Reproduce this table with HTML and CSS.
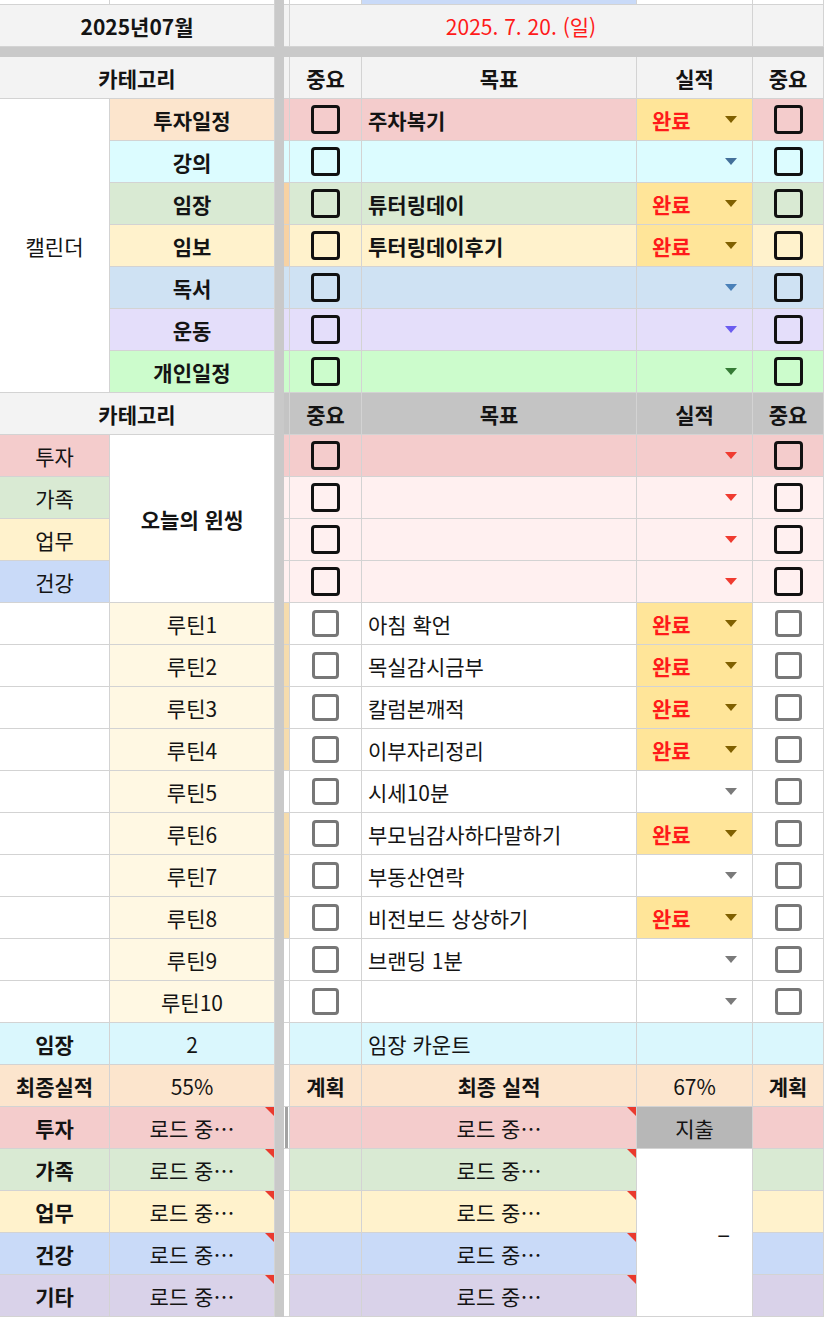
FILE: index.html
```html
<!DOCTYPE html>
<html lang="ko">
<head>
    <meta charset="UTF-8">
    <meta name="viewport" content="width=device-width, initial-scale=1.0">
    <title>데일리 플래너</title>
    <link rel="stylesheet" href="styles.css">
</head>
<body>
<div class="sheet">
    <div class="hdiv"></div>
    <div class="vdiv"></div>

    <!-- row above the date (scrolled off) -->
    <div class="c"></div><div class="c"></div><div class="c"></div><div class="c"></div>
    <div class="c top-blue"></div><div class="c"></div><div class="c"></div>

    <!-- date -->
    <div class="c hd b span2">2025년07월</div>
    <div class="c hd"></div>
    <div class="c hd date span3">2025. 7. 20. (일)</div>
    <div class="c hd"></div>

    <!-- calendar header -->
    <div class="c hd b span2">카테고리</div>
    <div class="c hd"></div>
    <div class="c hd b">중요</div>
    <div class="c hd b">목표</div>
    <div class="c hd b">실적</div>
    <div class="c hd b">중요</div>

    <!-- calendar -->
    <div class="c cal">캘린더</div>
    <div class="c peach b">투자일정</div>
    <div class="c pink"></div>
    <div class="c pink"><span class="box"></span></div>
    <div class="c pink b l">주차복기</div>
    <div class="c done sel">완료<i class="arr ol"></i></div>
    <div class="c pink"><span class="box"></span></div>

    <div class="c cyan b">강의</div>
    <div class="c cyan"></div>
    <div class="c cyan"><span class="box"></span></div>
    <div class="c cyan"></div>
    <div class="c cyan sel end"><i class="arr sl"></i></div>
    <div class="c cyan"><span class="box"></span></div>

    <div class="c green b">임장</div>
    <div class="c orange"></div>
    <div class="c green"><span class="box"></span></div>
    <div class="c green b l">튜터링데이</div>
    <div class="c done sel">완료<i class="arr ol"></i></div>
    <div class="c green"><span class="box"></span></div>

    <div class="c yellow b">임보</div>
    <div class="c orange"></div>
    <div class="c yellow"><span class="box"></span></div>
    <div class="c yellow b l">투터링데이후기</div>
    <div class="c done sel">완료<i class="arr ol"></i></div>
    <div class="c yellow"><span class="box"></span></div>

    <div class="c blue b">독서</div>
    <div class="c blue"></div>
    <div class="c blue"><span class="box"></span></div>
    <div class="c blue"></div>
    <div class="c blue sel end"><i class="arr bu"></i></div>
    <div class="c blue"><span class="box"></span></div>

    <div class="c lav b">운동</div>
    <div class="c lav"></div>
    <div class="c lav"><span class="box"></span></div>
    <div class="c lav"></div>
    <div class="c lav sel end"><i class="arr vi"></i></div>
    <div class="c lav"><span class="box"></span></div>

    <div class="c lime b">개인일정</div>
    <div class="c lime"></div>
    <div class="c lime"><span class="box"></span></div>
    <div class="c lime"></div>
    <div class="c lime sel end"><i class="arr gn"></i></div>
    <div class="c lime"><span class="box"></span></div>

    <!-- one thing header -->
    <div class="c hd b span2">카테고리</div>
    <div class="c hg"></div>
    <div class="c hg b">중요</div>
    <div class="c hg b">목표</div>
    <div class="c hg b">실적</div>
    <div class="c hg b">중요</div>

    <!-- one thing -->
    <div class="c pink">투자</div>
    <div class="c b wish">오늘의 윈씽</div>
    <div class="c pink"></div>
    <div class="c pink"><span class="box"></span></div>
    <div class="c pink"></div>
    <div class="c pink sel end"><i class="arr rd"></i></div>
    <div class="c pink"><span class="box"></span></div>

    <div class="c green">가족</div>
    <div class="c blush"></div>
    <div class="c blush"><span class="box"></span></div>
    <div class="c blush"></div>
    <div class="c blush sel end"><i class="arr rd"></i></div>
    <div class="c blush"><span class="box"></span></div>

    <div class="c yellow">업무</div>
    <div class="c blush"></div>
    <div class="c blush"><span class="box"></span></div>
    <div class="c blush"></div>
    <div class="c blush sel end"><i class="arr rd"></i></div>
    <div class="c blush"><span class="box"></span></div>

    <div class="c sky">건강</div>
    <div class="c blush"></div>
    <div class="c blush"><span class="box"></span></div>
    <div class="c blush"></div>
    <div class="c blush sel end"><i class="arr rd"></i></div>
    <div class="c blush"><span class="box"></span></div>

    <!-- routines -->
    <div class="c"></div>
    <div class="c cream">루틴1</div>
    <div class="c tan"></div>
    <div class="c"><span class="box soft"></span></div>
    <div class="c l">아침 확언</div>
    <div class="c done sel">완료<i class="arr ol"></i></div>
    <div class="c"><span class="box soft"></span></div>

    <div class="c"></div>
    <div class="c cream">루틴2</div>
    <div class="c tan"></div>
    <div class="c"><span class="box soft"></span></div>
    <div class="c l">목실감시금부</div>
    <div class="c done sel">완료<i class="arr ol"></i></div>
    <div class="c"><span class="box soft"></span></div>

    <div class="c"></div>
    <div class="c cream">루틴3</div>
    <div class="c tan"></div>
    <div class="c"><span class="box soft"></span></div>
    <div class="c l">칼럼본깨적</div>
    <div class="c done sel">완료<i class="arr ol"></i></div>
    <div class="c"><span class="box soft"></span></div>

    <div class="c"></div>
    <div class="c cream">루틴4</div>
    <div class="c tan"></div>
    <div class="c"><span class="box soft"></span></div>
    <div class="c l">이부자리정리</div>
    <div class="c done sel">완료<i class="arr ol"></i></div>
    <div class="c"><span class="box soft"></span></div>

    <div class="c"></div>
    <div class="c cream">루틴5</div>
    <div class="c"></div>
    <div class="c"><span class="box soft"></span></div>
    <div class="c l">시세10분</div>
    <div class="c sel end"><i class="arr gy"></i></div>
    <div class="c"><span class="box soft"></span></div>

    <div class="c"></div>
    <div class="c cream">루틴6</div>
    <div class="c tan"></div>
    <div class="c"><span class="box soft"></span></div>
    <div class="c l">부모님감사하다말하기</div>
    <div class="c done sel">완료<i class="arr ol"></i></div>
    <div class="c"><span class="box soft"></span></div>

    <div class="c"></div>
    <div class="c cream">루틴7</div>
    <div class="c tan"></div>
    <div class="c"><span class="box soft"></span></div>
    <div class="c l">부동산연락</div>
    <div class="c sel end"><i class="arr gy"></i></div>
    <div class="c"><span class="box soft"></span></div>

    <div class="c"></div>
    <div class="c cream">루틴8</div>
    <div class="c tan"></div>
    <div class="c"><span class="box soft"></span></div>
    <div class="c l">비전보드 상상하기</div>
    <div class="c done sel">완료<i class="arr ol"></i></div>
    <div class="c"><span class="box soft"></span></div>

    <div class="c"></div>
    <div class="c cream">루틴9</div>
    <div class="c"></div>
    <div class="c"><span class="box soft"></span></div>
    <div class="c l">브랜딩 1분</div>
    <div class="c sel end"><i class="arr gy"></i></div>
    <div class="c"><span class="box soft"></span></div>

    <div class="c"></div>
    <div class="c cream">루틴10</div>
    <div class="c"></div>
    <div class="c"><span class="box soft"></span></div>
    <div class="c l"></div>
    <div class="c sel end"><i class="arr gy"></i></div>
    <div class="c"><span class="box soft"></span></div>

    <!-- counts -->
    <div class="c aqua b">임장</div>
    <div class="c aqua">2</div>
    <div class="c"></div>
    <div class="c aqua"></div>
    <div class="c aqua l">임장 카운트</div>
    <div class="c aqua"></div>
    <div class="c aqua"></div>

    <div class="c peach b">최종실적</div>
    <div class="c peach">55%</div>
    <div class="c"></div>
    <div class="c peach b">계획</div>
    <div class="c peach b">최종 실적</div>
    <div class="c peach">67%</div>
    <div class="c peach b">계획</div>

    <!-- loading -->
    <div class="c pink b">투자</div>
    <div class="c pink note">로드 중…</div>
    <div class="c"><span class="thumb"></span></div>
    <div class="c pink"></div>
    <div class="c pink note">로드 중…</div>
    <div class="c gray">지출</div>
    <div class="c pink"></div>

    <div class="c green b">가족</div>
    <div class="c green note">로드 중…</div>
    <div class="c"></div>
    <div class="c green"></div>
    <div class="c green note">로드 중…</div>
    <div class="c spend">–</div>
    <div class="c green"></div>

    <div class="c yellow b">업무</div>
    <div class="c yellow note">로드 중…</div>
    <div class="c"></div>
    <div class="c yellow"></div>
    <div class="c yellow note">로드 중…</div>
    <div class="c yellow"></div>

    <div class="c sky b">건강</div>
    <div class="c sky note">로드 중…</div>
    <div class="c"></div>
    <div class="c sky"></div>
    <div class="c sky note">로드 중…</div>
    <div class="c sky"></div>

    <div class="c plum b">기타</div>
    <div class="c plum note">로드 중…</div>
    <div class="c"></div>
    <div class="c plum"></div>
    <div class="c plum note">로드 중…</div>
    <div class="c plum"></div>
</div>
</body>
</html>
```

FILE: styles.css
```css
body {
    margin: 0;
    background: #fff;
    font-family: "Noto Sans CJK KR", "Noto Sans", sans-serif;
    color: #141414;
}
.sheet {
    display: grid;
    width: 824px;
    grid-template-columns: 110px 165px 9px 6px 72px 275px 116px 71px;
    grid-template-rows: 5px 42px 10px repeat(30, 42px);
    grid-auto-rows: 42px;
    font-size: 21px;
}
.hdiv {
    grid-column: 1 / -1;
    grid-row: 3;
    background: #c9c9c9;
}
.vdiv {
    grid-column: 3;
    grid-row: 1 / -1;
    background: #c9c9c9;
}
.c {
    display: flex;
    align-items: center;
    justify-content: center;
    position: relative;
    overflow: hidden;
    white-space: nowrap;
    border-right: 1px solid #d3d3d3;
    border-bottom: 1px solid #d3d3d3;
}
.b { font-weight: 700; }
.l { justify-content: flex-start; padding-left: 6px; }
.span2 { grid-column: span 2; }
.span3 { grid-column: span 3; }
.cal { grid-row: span 7; }
.wish { grid-row: span 4; }
.spend {
    grid-row: span 4;
    justify-content: flex-end;
    padding-right: 22px;
    font-size: 24px;
}
.date { color: #ff1a1a; }

/* fills */
.hd { background: #f3f3f3; }
.hg { background: #c4c4c4; }
.top-blue { background: #c9daf8; }
.peach { background: #fce5cd; }
.pink { background: #f4cccc; }
.blush { background: #fff0f0; }
.cyan { background: #dcfcff; }
.aqua { background: #daf7fd; }
.green { background: #d9ead3; }
.yellow { background: #fff2cc; }
.blue { background: #cfe2f3; }
.sky { background: #c9daf8; }
.lav { background: #e4defa; }
.lime { background: #ccfccc; }
.plum { background: #d9d2e9; }
.cream { background: #fff8e3; }
.orange { background: #f7d2a4; }
.tan { background: #f5dcae; }
.gray { background: #b7b7b7; }
.done { background: #ffe599; color: #ff1a1a; font-weight: 700; }

/* dropdown chips */
.sel {
    justify-content: space-between;
    padding: 0 15px;
}
.sel.end { justify-content: flex-end; }
.arr {
    width: 0;
    height: 0;
    border-left: 6px solid transparent;
    border-right: 6px solid transparent;
    border-top: 7px solid #7f6000;
}
.arr.ol { border-top-color: #806000; }
.arr.sl { border-top-color: #43709a; }
.arr.bu { border-top-color: #4a80b8; }
.arr.vi { border-top-color: #6b5cf0; }
.arr.gn { border-top-color: #357a35; }
.arr.rd { border-top-color: #f03b30; }
.arr.gy { border-top-color: #7a7a7a; }

/* checkboxes */
.box {
    width: 29px;
    height: 29px;
    box-sizing: border-box;
    border: 3px solid #111;
    border-radius: 4px;
}
.box.soft {
    width: 27px;
    height: 27px;
    border-color: #777;
}

/* comment marker */
.note::after {
    content: "";
    position: absolute;
    top: 0;
    right: 0;
    border-top: 9px solid #ea3a2e;
    border-left: 9px solid transparent;
}
.thumb {
    width: 3px;
    height: 100%;
    background: #a3a3a3;
}
```
